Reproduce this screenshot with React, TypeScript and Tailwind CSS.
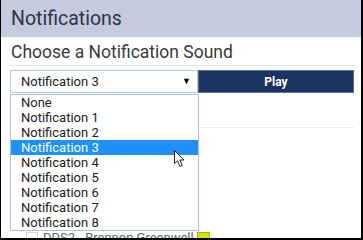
import React from 'react'

const sounds = ['None', 'Notification 1', 'Notification 2', 'Notification 3', 'Notification 4', 'Notification 5', 'Notification 6', 'Notification 7', 'Notification 8']

function Cursor() {
  return (
    <svg width="12" height="18" viewBox="0 0 12 18" className="absolute left-[173px] top-[150px]">
      <path d="M0.5 0.5 L0.5 13.5 L3.5 10.8 L6 16.5 L8.3 15.5 L5.9 10 L10 10 Z" fill="#fff" stroke="#222" strokeWidth="1" strokeLinejoin="round" />
    </svg>
  )
}

export default function App() {
  const selected = 'Notification 3'

  return (
    <div className="relative w-[363px] h-[240px] overflow-hidden bg-white border-l border-r-2 border-b-2 border-black font-['Roboto',sans-serif]">
      {/* header */}
      <div className="h-[37px] bg-[#c3cbdc] pl-[10px] flex items-center text-[19.5px] text-[#2c3648]">
        Notifications
      </div>

      <div className="pl-[9px] pr-[7px]">
        <div className="pt-[3px] h-[29px] border-b border-[#e9e9e9] text-[17.5px] leading-[24px] text-[#3a3a3a] pl-[1px]">
          Choose a Notification Sound
        </div>

        <div className="flex mt-[4px] h-[23px]">
          <div className="w-[188px] flex items-center justify-between border border-[#b3c6e6] pl-[10px] pr-[6px] text-[13px] text-[#222]">
            <span>{selected}</span>
            <span className="text-[9px] text-black">▼</span>
          </div>
          <div className="flex-1 bg-[#1b3462] border border-[#56709c] flex items-center justify-center text-[12px] font-bold text-white">
            Play
          </div>
        </div>

        <div className="h-[35px] border-b border-[#ececec]" />

        <div className="pt-[101px] flex items-center h-[118px]">
          <div className="ml-[16px] w-[12px] h-[12px] border border-[#cfcfcf] bg-white" />
          <span className="ml-[5px] text-[13px] text-[#666]">DDS2 - Brennon Greenwell</span>
          <div className="ml-[3px] w-[13px] h-[12px] bg-[#d6e400] border border-[#a9b300]" />
        </div>
      </div>

      {/* open select menu */}
      <div className="absolute left-[9px] top-[94px] w-[189px] bg-white border border-[#a9bfe6]">
        {sounds.map((s) => (
          <div
            key={s}
            className={`h-[15px] pl-[10px] text-[13px] leading-[15px] ${s === selected ? 'bg-[#1e90ff] text-white' : 'text-[#222]'}`}
          >
            {s}
          </div>
        ))}
      </div>

      <Cursor />
    </div>
  )
}
